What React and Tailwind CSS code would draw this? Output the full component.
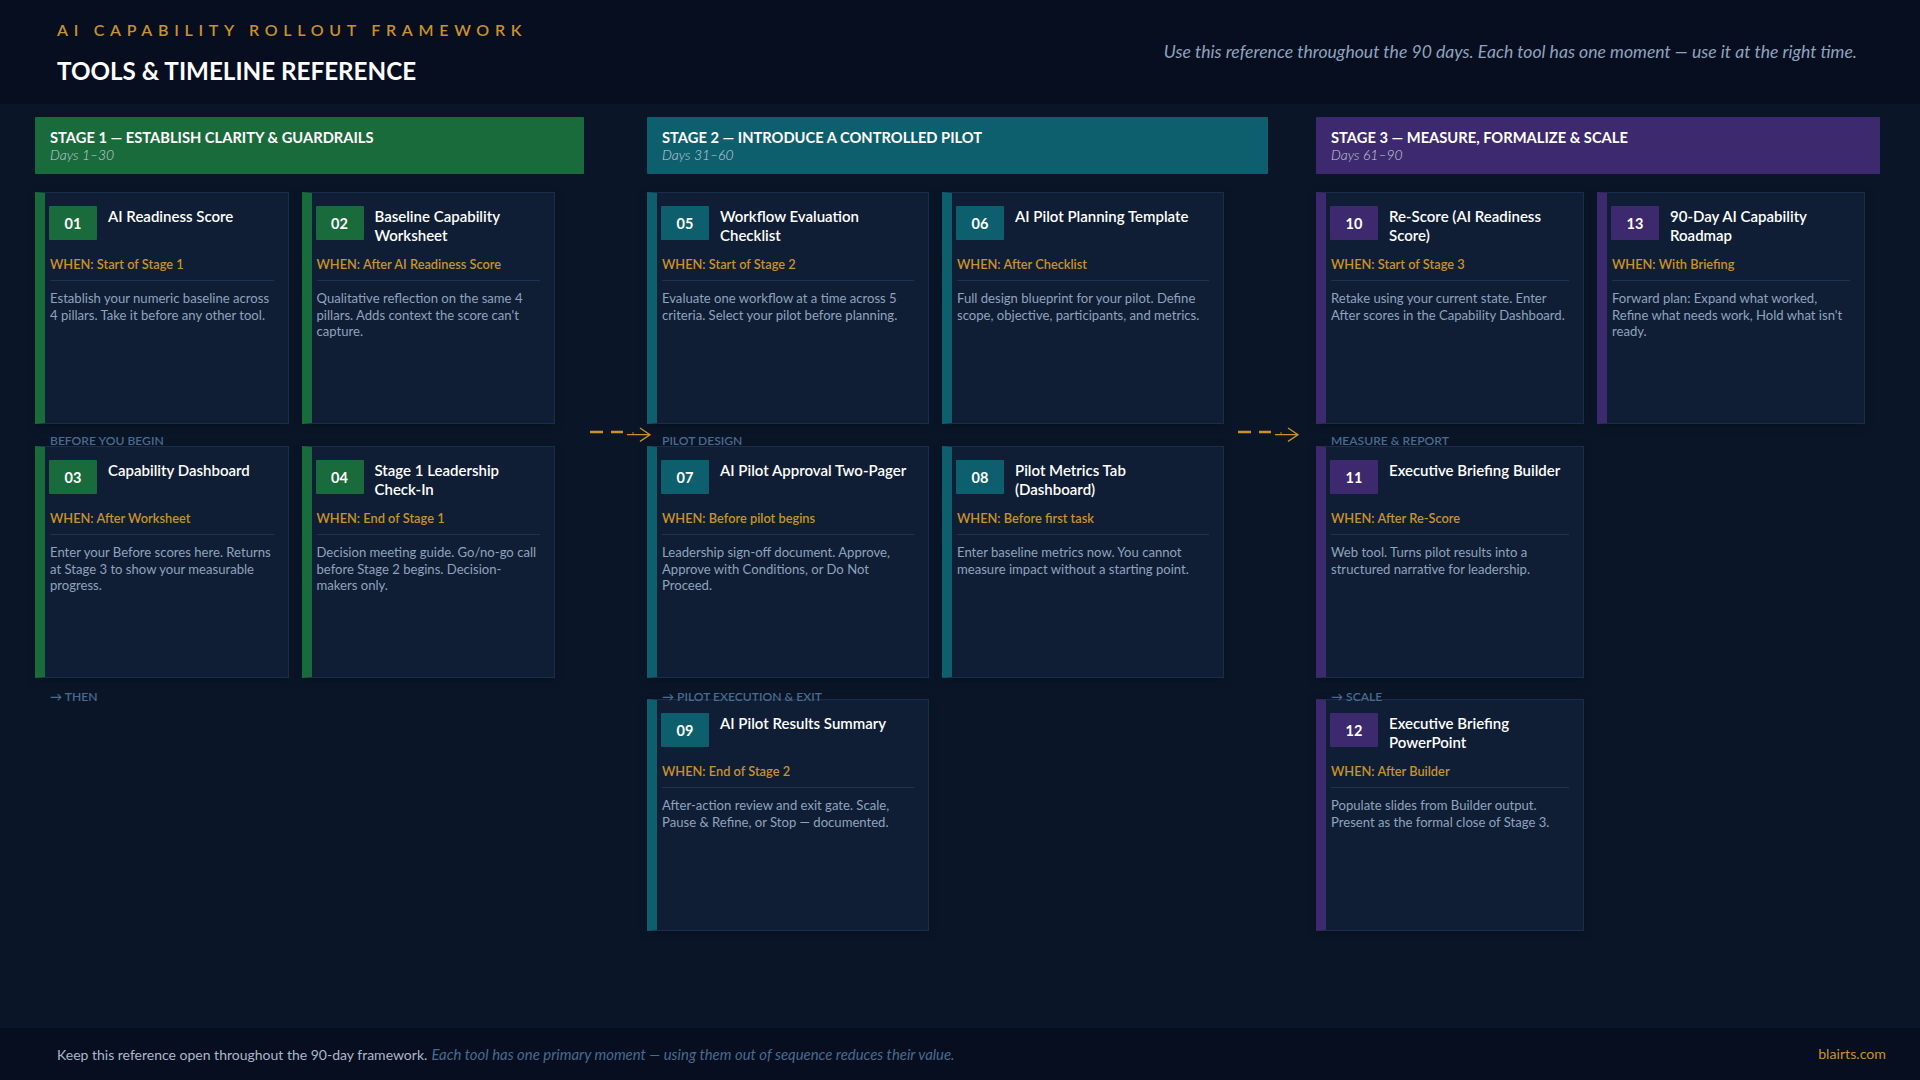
import React from 'react';

const green = { bar: 'border-l-[#1a6b3c]', box: 'bg-[#1a6b3c]' };
const teal = { bar: 'border-l-[#0e5f6e]', box: 'bg-[#0e5f6e]' };
const purple = { bar: 'border-l-[#3d2a6e]', box: 'bg-[#3d2a6e]' };

const Card = ({ tone, num, title, when, desc }) => (
  <div className={`h-[232px] flex flex-col border border-[#1a2d4a] border-l-[10px] ${tone.bar} bg-[#0f1e35] pt-[13px] pl-[5px] pr-[14px] shadow-[0_2px_8px_rgba(0,0,0,0.3)]`}>
    <div className="flex h-[39px] gap-[11px]">
      <div className={`-ml-[1px] w-[48px] h-[34px] shrink-0 flex items-center justify-center rounded-[1px] ${tone.box} text-white text-[14.5px] font-bold pt-[2px]`}>{num}</div>
      <div className="text-white text-[15px] font-semibold leading-[19.3px] pt-[1px]">{title}</div>
    </div>
    <div className="mt-[11px] text-[#c9922a] text-[12.8px] font-semibold leading-[16px] pb-[8px] border-b border-[#1e3352]">WHEN: {when}</div>
    <div className="mt-[9px] text-[#8fa3bd] text-[13.1px] leading-[16.7px]">{desc}</div>
  </div>
);

const Label = ({ children, className }) => (
  <div className={`relative z-10 h-[13px] pl-[15px] text-[#4a6a8f] text-[12.1px] font-semibold leading-[13px] ${className}`}>{children}</div>
);

const Banner = ({ bg, title, days }) => (
  <div className={`${bg} h-[57px] rounded-[1px] pl-[15px] pt-[11px]`}>
    <div className="text-white text-[14.7px] font-bold leading-[18px]">{title}</div>
    <div className="text-[#c5cfdc] text-[13.9px] italic font-light leading-[18px]">{days}</div>
  </div>
);

const Arrow = ({ className }) => (
  <svg className={`absolute top-[322px] z-20 ${className}`} width="62" height="20" viewBox="0 0 62 20" fill="none" stroke="#c9922a">
    <path d="M0 6H13M21 6H33" strokeWidth="2.4" />
    <path d="M37 8.7H59.5M50 2L60 8.7L50 15.4" strokeWidth="1.3" />
    <path d="M43 6V8.7" strokeWidth="0.8" />
  </svg>
);

const App = () => {
  return (
    <div className="w-[1920px] h-[1080px] flex flex-col bg-[#0a1628] font-['Lato',sans-serif] overflow-hidden">
      <header className="h-[104px] shrink-0 bg-[#070e20] flex items-center justify-between pl-[57px] pr-[63px]">
        <div>
          <div className="text-[#c9922a] text-[16px] font-semibold tracking-[5.7px] leading-[18px] mt-[3px]">AI CAPABILITY ROLLOUT FRAMEWORK</div>
          <div className="text-white text-[24.2px] font-bold leading-[30px] mt-[17px]">TOOLS &amp; TIMELINE REFERENCE</div>
        </div>
        <div className="text-[#8fa3bd] text-[17.6px] italic">Use this reference throughout the 90 days. Each tool has one moment — use it at the right time.</div>
      </header>

      <main className="relative flex-1 flex pt-[13px] pl-[35px]">
        <Arrow className="left-[590px]" />
        <Arrow className="left-[1238px]" />

        <section className="w-[549px] shrink-0">
          <Banner bg="bg-[#1a6b3c]" title="STAGE 1 — ESTABLISH CLARITY & GUARDRAILS" days="Days 1–30" />
          <div className="mt-[18px] grid grid-cols-[253.5px_253.5px] gap-[13px]">
            <Card tone={green} num="01" title="AI Readiness Score" when="Start of Stage 1" desc="Establish your numeric baseline across 4 pillars. Take it before any other tool." />
            <Card tone={green} num="02" title="Baseline Capability Worksheet" when="After AI Readiness Score" desc="Qualitative reflection on the same 4 pillars. Adds context the score can't capture." />
          </div>
          <Label className="mt-[10px] mb-[-1px]">BEFORE YOU BEGIN</Label>
          <div className="grid grid-cols-[253.5px_253.5px] gap-[13px]">
            <Card tone={green} num="03" title="Capability Dashboard" when="After Worksheet" desc="Enter your Before scores here. Returns at Stage 3 to show your measurable progress." />
            <Card tone={green} num="04" title="Stage 1 Leadership Check-In" when="End of Stage 1" desc="Decision meeting guide. Go/no-go call before Stage 2 begins. Decision-makers only." />
          </div>
          <Label className="mt-[12px]">→ THEN</Label>
        </section>

        <section className="ml-[63px] w-[621px] shrink-0">
          <Banner bg="bg-[#0e5f6e]" title="STAGE 2 — INTRODUCE A CONTROLLED PILOT" days="Days 31–60" />
          <div className="mt-[18px] grid grid-cols-[282px_282px] gap-[13px]">
            <Card tone={teal} num="05" title="Workflow Evaluation Checklist" when="Start of Stage 2" desc="Evaluate one workflow at a time across 5 criteria. Select your pilot before planning." />
            <Card tone={teal} num="06" title="AI Pilot Planning Template" when="After Checklist" desc="Full design blueprint for your pilot. Define scope, objective, participants, and metrics." />
          </div>
          <Label className="mt-[10px] mb-[-1px]">PILOT DESIGN</Label>
          <div className="grid grid-cols-[282px_282px] gap-[13px]">
            <Card tone={teal} num="07" title="AI Pilot Approval Two-Pager" when="Before pilot begins" desc="Leadership sign-off document. Approve, Approve with Conditions, or Do Not Proceed." />
            <Card tone={teal} num="08" title={<>Pilot Metrics Tab<br />(Dashboard)</>} when="Before first task" desc="Enter baseline metrics now. You cannot measure impact without a starting point." />
          </div>
          <Label className="mt-[12px] mb-[-4px]">→ PILOT EXECUTION &amp; EXIT</Label>
          <div className="grid grid-cols-[282px_282px] gap-[13px]">
            <Card tone={teal} num="09" title="AI Pilot Results Summary" when="End of Stage 2" desc="After-action review and exit gate. Scale, Pause & Refine, or Stop — documented." />
          </div>
        </section>

        <section className="ml-[48px] w-[564px] shrink-0">
          <Banner bg="bg-[#3d2a6e]" title="STAGE 3 — MEASURE, FORMALIZE & SCALE" days="Days 61–90" />
          <div className="mt-[18px] grid grid-cols-[268px_268px] gap-[13px]">
            <Card tone={purple} num="10" title="Re-Score (AI Readiness Score)" when="Start of Stage 3" desc="Retake using your current state. Enter After scores in the Capability Dashboard." />
            <Card tone={purple} num="13" title="90-Day AI Capability Roadmap" when="With Briefing" desc="Forward plan: Expand what worked, Refine what needs work, Hold what isn't ready." />
          </div>
          <Label className="mt-[10px] mb-[-1px]">MEASURE &amp; REPORT</Label>
          <div className="grid grid-cols-[268px_268px] gap-[13px]">
            <Card tone={purple} num="11" title="Executive Briefing Builder" when="After Re-Score" desc="Web tool. Turns pilot results into a structured narrative for leadership." />
          </div>
          <Label className="mt-[12px] mb-[-4px]">→ SCALE</Label>
          <div className="grid grid-cols-[268px_268px] gap-[13px]">
            <Card tone={purple} num="12" title="Executive Briefing PowerPoint" when="After Builder" desc="Populate slides from Builder output. Present as the formal close of Stage 3." />
          </div>
        </section>
      </main>

      <footer className="h-[52px] shrink-0 bg-[#070e20] flex items-center justify-between pl-[57px] pr-[34px]">
        <div>
          <span className="text-[#a9b8cb] text-[14px]">Keep this reference open throughout the 90-day framework.</span>{' '}
          <span className="text-[#4a6a8f] text-[14.9px] italic">Each tool has one primary moment — using them out of sequence reduces their value.</span>
        </div>
        <div className="text-[#c9922a] text-[14.2px]">blairts.com</div>
      </footer>
    </div>
  );
};

export default App;
